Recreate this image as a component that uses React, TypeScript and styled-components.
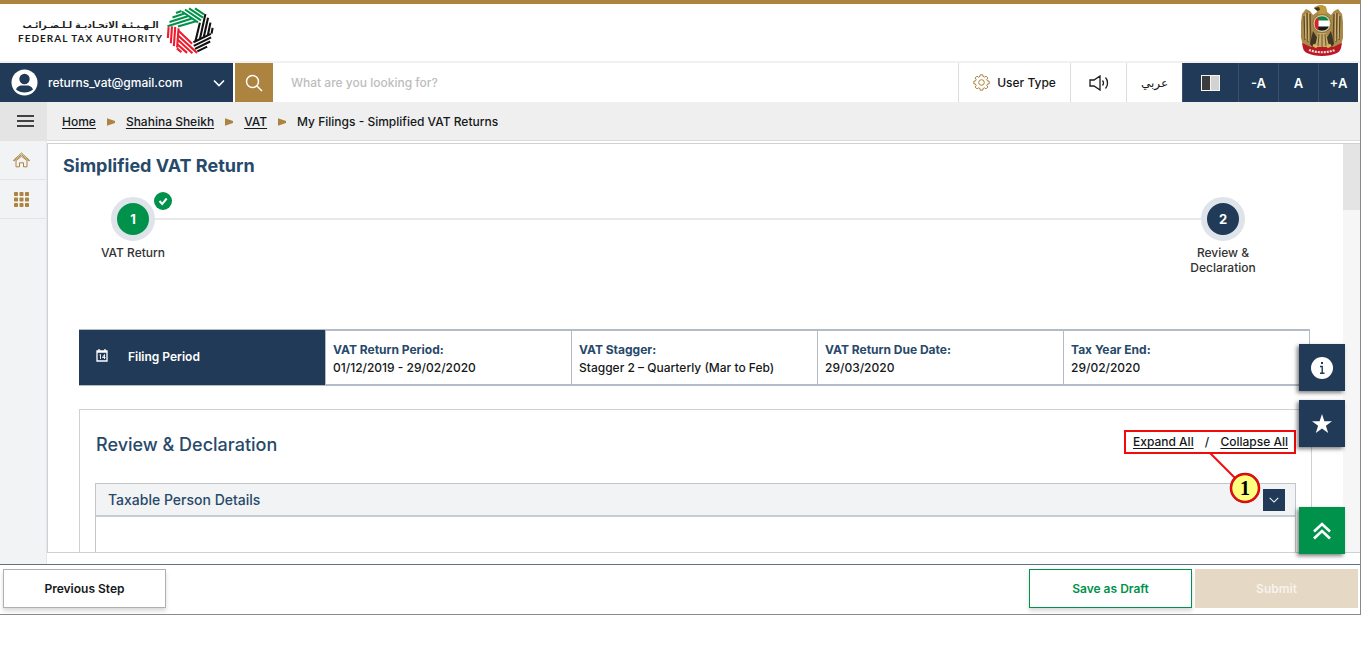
import React from "react";
import styled, { createGlobalStyle } from "styled-components";

const navy = "#203a57";
const ink = "#27496a";
const gold = "#ad8340";
const green = "#00924a";

const GlobalStyle = createGlobalStyle`
  *, *::before, *::after { box-sizing: border-box; }
  body {
    margin: 0;
    background: #fff;
    color: #16181a;
    font-family: Inter, "DejaVu Sans", sans-serif;
    font-size: 12px;
    font-weight: 500;
    line-height: 18px;
  }
  button, input { font: inherit; color: inherit; }
  button { cursor: pointer; padding: 0; border: 0; background: none; }
  a { color: inherit; }
  h1, h2, h3, dl, dd, ol, p { margin: 0; padding: 0; }
`;

const Page = styled.div`
  height: 100vh;
  padding-bottom: 33px;
`;

const Frame = styled.div`
  position: relative;
  display: flex;
  flex-direction: column;
  height: 100%;
  border-top: 4px solid ${gold};
  border-right: 1px solid #8a8a8a;
  border-bottom: 1px solid #8a8a8a;
`;

const Masthead = styled.header`
  display: flex;
  align-items: center;
  justify-content: space-between;
  height: 59px;
  flex: none;
  padding: 0 16px 4px 18px;
  border-bottom: 2px solid #f1f1f1;
`;

const Brand = styled.a`
  display: flex;
  align-items: center;
  gap: 3px;
  color: #1c1c1c;
  text-decoration: none;
`;

const BrandText = styled.span`
  display: flex;
  flex-direction: column;
  align-items: center;
`;

const BrandArabic = styled.span`
  font-family: "DejaVu Sans", sans-serif;
  font-size: 9px;
  font-weight: 700;
  line-height: 14px;
  white-space: nowrap;
`;

const BrandLatin = styled.span`
  font-family: Lato, sans-serif;
  font-size: 10px;
  font-weight: 700;
  line-height: 12px;
  letter-spacing: 1px;
  white-space: nowrap;
`;

const Toolbar = styled.div`
  display: flex;
  flex: none;
  height: 39px;
  padding-right: 2px;
`;

const Account = styled.button`
  display: flex;
  align-items: center;
  gap: 10px;
  width: 233px;
  padding: 0 7px 0 11px;
  background: ${navy};
  color: #fff;
  text-align: left;
`;

const AccountName = styled.span`
  flex: 1;
`;

const SearchForm = styled.form`
  display: flex;
  flex: 1;
  margin-left: 2px;
`;

const SearchButton = styled.button`
  display: grid;
  place-items: center;
  width: 38px;
  background: ${gold};
`;

const SearchInput = styled.input`
  flex: 1;
  min-width: 0;
  padding: 0 18px;
  border: 0;
  outline: 0;
  background: #fff;
  &::placeholder { color: #bdbdbd; opacity: 1; }
`;

const ToolButton = styled.button<{ $width: number }>`
  display: flex;
  align-items: center;
  justify-content: center;
  gap: 7px;
  width: ${(p) => p.$width}px;
  border-left: 1px solid #dcdcdc;
`;

const NavyButton = styled(ToolButton)`
  background: ${navy};
  border-left-color: #3a516b;
  color: #fff;
  font-size: 13px;
  font-weight: 600;
`;

const Trail = styled.div`
  display: flex;
  flex: none;
  height: 39px;
  background: #efefef;
`;

const MenuButton = styled.button`
  display: grid;
  place-items: center;
  width: 47px;
  padding: 0 0 2px 4px;
  background: #e4e4e4;
`;

const Crumbs = styled.ol`
  display: flex;
  flex: 1;
  align-items: center;
  gap: 11px;
  padding: 2px 0 0 15px;
  list-style: none;
  border-bottom: 1px solid #dcdcdc;
`;

const Crumb = styled.li`
  display: flex;
  align-items: center;
  gap: 11px;
  a { text-underline-offset: 2px; }
`;

const Body = styled.div`
  display: flex;
  flex: 1;
  min-height: 0;
`;

const Rail = styled.nav`
  width: 47px;
  flex: none;
  background: #f2f3f5;
  border-right: 1px solid #e4e6e8;
`;

const RailLink = styled.a`
  display: grid;
  place-items: center;
  height: 39px;
  padding-right: 3px;
  border-bottom: 1px solid #e2e4e6;
`;

const Pane = styled.main`
  display: flex;
  flex: 1;
  min-width: 0;
  margin: 2px 0 11px;
  border: 1px solid #cfd2d4;
  border-right: 0;
`;

const Content = styled.div`
  flex: 1;
  min-width: 0;
  overflow: hidden;
`;

const ScrollTrack = styled.div`
  width: 17px;
  flex: none;
  background: #f6f6f6;
`;

const ScrollThumb = styled.div`
  height: 66px;
  background: #e4e4e4;
`;

const Title = styled.h1`
  padding: 10px 15px 0;
  color: ${ink};
  font-size: 18px;
  font-weight: 700;
  line-height: 24px;
`;

const Steps = styled.ol`
  display: grid;
  grid-template-columns: 80px 1fr 80px;
  height: 132px;
  margin: 19px 80px 0 45px;
  list-style: none;
`;

const Step = styled.li`
  display: flex;
  flex-direction: column;
  align-items: center;
  gap: 4px;
  color: #333;
  line-height: 15px;
  text-align: center;
`;

const StepDot = styled.span<{ $done?: boolean }>`
  position: relative;
  display: grid;
  place-items: center;
  width: 44px;
  height: 44px;
  border: 6px solid #dfe3ea;
  border-radius: 50%;
  background: ${(p) => (p.$done ? green : navy)};
  color: #fff;
  font-size: 13px;
  font-weight: 700;
`;

const StepCheck = styled.svg`
  position: absolute;
  top: -11px;
  right: -23px;
`;

const StepLine = styled.li`
  height: 2px;
  margin: 21px -18px 0;
  background: #e7e9eb;
`;

const Period = styled.section`
  display: grid;
  grid-template-columns: repeat(5, 1fr);
  height: 57px;
  margin: 0 33px 0 31px;
  border: 2px solid #b3bcc6;
  border-width: 2px 1px 2px 0;
`;

const PeriodHead = styled.h2`
  display: flex;
  align-items: center;
  gap: 20px;
  margin: -1px 0;
  padding: 0 0 1px 17px;
  background: ${navy};
  color: #fff;
  font-size: 12px;
  font-weight: 600;
  svg { margin-bottom: 4px; }
`;

const PeriodCell = styled.dl`
  padding: 10px 7px 0;
  border-left: 1px solid #b3bcc6;
  white-space: nowrap;
  dt { color: ${ink}; font-weight: 700; }
`;

const Card = styled.section`
  height: 300px;
  margin: 23px 31px 0;
  padding: 20px 15px 0;
  border: 1px solid #cfd2d4;
`;

const CardHead = styled.div`
  display: flex;
  justify-content: space-between;
  align-items: flex-start;
  height: 53px;
`;

const CardTitle = styled.h2`
  padding: 3px 0 0 1px;
  color: ${ink};
  font-size: 18px;
  font-weight: 500;
  line-height: 24px;
`;

const Highlight = styled.div`
  position: relative;
  display: flex;
  align-items: center;
  justify-content: space-between;
  width: 172px;
  height: 24px;
  padding: 0 6px 0 7px;
  border: 2px solid #f50a0a;
`;

const TextButton = styled.button`
  text-decoration: underline;
  text-underline-offset: 2px;
`;

const Callout = styled.svg`
  position: absolute;
  z-index: 2;
  top: 20px;
  left: 83px;
  font-family: "Liberation Serif", serif;
  font-size: 20px;
  font-weight: 700;
`;

const Panel = styled.div`
  height: 200px;
  border: 1px solid #c3c6c9;
`;

const PanelHead = styled.div`
  display: flex;
  align-items: center;
  justify-content: space-between;
  height: 33px;
  padding: 0 10px 0 12px;
  background: #f2f3f5;
  border-bottom: 2px solid #c9cccf;
`;

const PanelTitle = styled.h3`
  color: ${ink};
  font-size: 14px;
  font-weight: 500;
`;

const PanelToggle = styled.button`
  display: grid;
  place-items: center;
  width: 22px;
  height: 22px;
  background: ${navy};
`;

const Floating = styled.div`
  position: absolute;
  z-index: 3;
  right: 15px;
  bottom: 60px;
  display: flex;
  flex-direction: column;
  gap: 9px;
`;

const FloatButton = styled.button<{ $top?: boolean }>`
  display: grid;
  place-items: center;
  width: 46px;
  height: 47px;
  margin-top: ${(p) => (p.$top ? 51 : 0)}px;
  background: ${(p) => (p.$top ? green : navy)};
  box-shadow: -2px 2px 4px rgba(0, 0, 0, 0.5);
`;

const Actions = styled.footer`
  display: flex;
  flex: none;
  gap: 3px;
  height: 50px;
  padding: 4px 2px 6px 3px;
  border-top: 1px solid #5f7380;
`;

const ActionButton = styled.button<{ $kind: "plain" | "draft" | "submit" }>`
  width: 163px;
  background: ${(p) => (p.$kind === "submit" ? "#e5d8c4" : "#fff")};
  border: 1px solid ${(p) => ({ plain: "#b0b0b0", draft: green, submit: "#e5d8c4" })[p.$kind]};
  color: ${(p) => ({ plain: "#16181a", draft: green, submit: "#f8f3ec" })[p.$kind]};
  font-weight: 600;
  box-shadow: ${(p) => (p.$kind === "submit" ? "none" : "0 3px 4px rgba(0, 0, 0, 0.15)")};
`;

const Spacer = styled.div`
  flex: 1;
`;

const FtaMark = () => (
  <svg width="48" height="48" viewBox="-24 -24 48 48" aria-hidden="true">
    {[green, "#111", "#ee1c2e"].map((color, i) => (
      <g key={color} stroke={color} strokeWidth="2.100" fill="none" transform={`rotate(${i * 120})`}>
        <path d="M-8-19.500 8-8.600M-5-21.500 11-10.700M-1-22.700 13-13.300M5-22.700 14-16.600" />
        <path d="M-14-18-8.500-20M-17.500-13.500-5.500-17.500M-20.500-9-1.500-15M-22.500-4.800 2-12.600M-12-4.500 6-9.800" />
      </g>
    ))}
  </svg>
);

const Emblem = () => (
  <svg width="44" height="54" viewBox="0 0 44 54" role="img" aria-label="United Arab Emirates emblem">
    <path d="M14 4c2-3 9-4 12-1l1 5 4 3 3-4 4-2 4 5 1 8v16l-2 7-5 4H8l-5-4-2-7V18l1-8 4-5 4 2 3 4 4-3 1-3z" fill="#a98a4a" />
    <path d="M14 4c2-3 9-4 12-1l1 5-3 3-5-1-1-4z" fill="#c09a3c" />
    <path d="M14 4l5-1 1 3-3 1z" fill="#3d3020" />
    <path d="M4 12l1 24M7 9l1 29M10 10l1 29M40 12l-1 24M37 9l-1 29M34 10l-1 29" stroke="#5c4a28" strokeWidth="1.200" />
    <path d="M5.500 10v25M8.500 9v28M38.500 10v25M35.500 9v28" stroke="#dcc58a" strokeWidth=".7" />
    <path d="M13 27l-3 13 3 4 5-9zM31 27l3 13-3 4-5-9z" fill="#3f3524" />
    <path d="M18 29h8l3 14H15z" fill="#c7ac6a" />
    <path d="M19 30l-1 12M22 30v13M25 30l1 12" stroke="#6a5530" strokeWidth="1" />
    <circle cx="22" cy="19.500" r="9" fill="#dccb92" stroke="#7b6433" strokeWidth=".8" />
    <circle cx="22" cy="19.500" r="7.500" fill="#fff" />
    <path d="M15.200 16.500a7.500 7.500 0 0 1 13.600 0z" fill="#11834a" />
    <path d="M15.200 22.500a7.500 7.500 0 0 0 13.600 0z" fill="#1a1a1a" />
    <path d="M18.500 12.900v13.200a7.500 7.500 0 0 1 0-13.200z" fill="#d8212f" />
    <path d="M2 39c4 1 5 3 9 4h22c4-1 5-3 9-4-1 5-1 8-5 10-8 4-22 4-30 0-4-2-4-5-5-10z" fill="#bb1826" />
    <path d="M9 46c8 3 18 3 26 0" stroke="#f2d9d9" strokeWidth="2.200" strokeDasharray="2 1" fill="none" />
    <path d="M13 41l4 2M31 41l-4 2" stroke="#d9b659" strokeWidth="3" />
  </svg>
);

const Chevron = ({ size = 14, weight = 1.6 }: { size?: number; weight?: number }) => (
  <svg width={size} height={size} viewBox="0 0 14 14" fill="none" stroke="#fff" strokeWidth={weight} aria-hidden="true">
    <path d="M2 4.500 7 9.500l5-5" />
  </svg>
);

const UserIcon = () => (
  <svg width="27" height="27" viewBox="0 0 27 27" aria-hidden="true">
    <circle cx="13.500" cy="13.500" r="13" fill="#fff" />
    <circle cx="13.500" cy="10" r="5.200" fill={navy} />
    <path d="M5 20.500c2-4.500 5-4 8.500-4s6.500-.5 8.500 4c-4.500 4-12.500 4-17 0z" fill={navy} />
  </svg>
);

const gearOutline = Array.from({ length: 8 }, (_, i) => {
  const at = (deg: number, r: number) => {
    const a = ((i * 45 + deg) * Math.PI) / 180;
    return `${(8.5 + r * Math.cos(a)).toFixed(2)} ${(8.5 + r * Math.sin(a)).toFixed(2)}`;
  };
  return `${at(-14, 6.2)} ${at(-10, 7.8)} ${at(10, 7.8)} ${at(14, 6.2)}`;
}).join(" ");

const GearIcon = () => (
  <svg width="17" height="17" viewBox="0 0 17 17" fill="none" stroke={gold} strokeLinejoin="round" aria-hidden="true">
    <polygon points={gearOutline} />
    <circle cx="8.500" cy="8.500" r="2.800" />
  </svg>
);

const SpeakerIcon = () => (
  <svg width="20" height="16" viewBox="0 0 20 16" fill="none" stroke="#1c1c1c" strokeWidth="1.300" aria-hidden="true">
    <path d="M1 5v6h4l6 4V1L5 5zM13.500 5.500c1.200 1.500 1.200 3.500 0 5M16.500 2.500c2.700 3 2.700 8 0 11" />
  </svg>
);

const HomeIcon = () => (
  <svg width="17" height="16" viewBox="0 0 17 16" fill="none" stroke={gold} strokeWidth="1" aria-hidden="true">
    <path d="M1 9 .6 8.200 8.500 1l7.900 7.200L16 9 8.500 2.800zM3 8.500v6.300h3.500v-4h4v4H14V8.500L8.500 4.300z" />
  </svg>
);

const GridIcon = () => (
  <svg width="15" height="15" viewBox="0 0 15 15" fill={gold} aria-hidden="true">
    {[0, 5.5, 11].map((y) => [0, 5.5, 11].map((x) => <rect key={`${x}-${y}`} x={x} y={y} width="4" height="4" rx=".8" />))}
  </svg>
);

const CalendarIcon = () => (
  <svg width="12" height="13" viewBox="0 0 12 13" fill="none" stroke="#fff" aria-hidden="true">
    <path d="M1 2v10h10V2zM1 3h10M3 0v3M9 0v3" strokeWidth="1.300" />
    <path d="M3.500 6 4.500 5.500V10M8.500 10V5.500L6.500 8.500H9.500" strokeWidth=".9" />
  </svg>
);

const Arrow = () => (
  <svg width="8" height="8" viewBox="0 0 8 8" fill={gold} aria-hidden="true">
    <path d="M0 .3 8 3v2L0 7.700z" />
  </svg>
);

const periods = [
  ["VAT Return Period:", "01/12/2019 - 29/02/2020"],
  ["VAT Stagger:", "Stagger 2 – Quarterly (Mar to Feb)"],
  ["VAT Return Due Date:", "29/03/2020"],
  ["Tax Year End:", "29/02/2020"],
];

export default function App() {
  return (
    <Page>
      <GlobalStyle />
      <Frame>
        <Masthead>
          <Brand href="#home">
            <BrandText>
              <BrandArabic lang="ar" dir="rtl">الـهـيـئـة الاتحـاديـة لـلـضـرائـب</BrandArabic>
              <BrandLatin>FEDERAL TAX AUTHORITY</BrandLatin>
            </BrandText>
            <FtaMark />
          </Brand>
          <Emblem />
        </Masthead>

        <Toolbar>
          <Account type="button">
            <UserIcon />
            <AccountName>returns_vat@gmail.com</AccountName>
            <Chevron />
          </Account>
          <SearchForm role="search">
            <SearchButton type="button" aria-label="Search">
              <svg width="18" height="18" viewBox="0 0 18 18" fill="none" stroke="#fff" strokeWidth="1.500" aria-hidden="true">
                <circle cx="7.500" cy="7.500" r="6" />
                <path d="m12 12 5 5" />
              </svg>
            </SearchButton>
            <SearchInput type="search" aria-label="Search" placeholder="What are you looking for?" />
          </SearchForm>
          <ToolButton type="button" $width={112}><GearIcon />User Type</ToolButton>
          <ToolButton type="button" $width={56} aria-label="Read aloud"><SpeakerIcon /></ToolButton>
          <ToolButton type="button" $width={56} lang="ar">عربي</ToolButton>
          <NavyButton type="button" $width={56} aria-label="Contrast">
            <svg width="19" height="16" viewBox="0 0 19 16" aria-hidden="true">
              <path d="M0 0h19v16H0z" fill="#f4f4f4" />
              <path d="M1 1h8v14H1z" fill="#3c3c3c" />
              <path d="M10 1h8v14h-8z" fill="#d2d2d2" />
            </svg>
          </NavyButton>
          <NavyButton type="button" $width={40}>-A</NavyButton>
          <NavyButton type="button" $width={40}>A</NavyButton>
          <NavyButton type="button" $width={40}>+A</NavyButton>
        </Toolbar>

        <Trail>
          <MenuButton type="button" aria-label="Menu">
            <svg width="17" height="14" viewBox="0 0 17 14" stroke="#3f4142" strokeWidth="2" aria-hidden="true">
              <path d="M0 2h17M0 7h17M0 12h17" />
            </svg>
          </MenuButton>
          <Crumbs>
            <Crumb><a href="#home">Home</a><Arrow /></Crumb>
            <Crumb><a href="#profile">Shahina Sheikh</a><Arrow /></Crumb>
            <Crumb><a href="#vat">VAT</a><Arrow /></Crumb>
            <Crumb>My Filings - Simplified VAT Returns</Crumb>
          </Crumbs>
        </Trail>

        <Body>
          <Rail>
            <RailLink href="#home" aria-label="Home"><HomeIcon /></RailLink>
            <RailLink href="#services" aria-label="Services"><GridIcon /></RailLink>
          </Rail>
          <Pane>
            <Content>
              <Title>Simplified VAT Return</Title>
              <Steps>
                <Step>
                  <StepDot $done>
                    1
                    <StepCheck width="18" height="18" viewBox="0 0 18 18" aria-hidden="true">
                      <circle cx="9" cy="9" r="9" fill={green} />
                      <path d="m5.500 9 2.700 3 4.500-5.500" fill="none" stroke="#fff" strokeWidth="2" />
                    </StepCheck>
                  </StepDot>
                  VAT Return
                </Step>
                <StepLine aria-hidden="true" />
                <Step>
                  <StepDot>2</StepDot>
                  Review &amp; Declaration
                </Step>
              </Steps>

              <Period>
                <PeriodHead><CalendarIcon />Filing Period</PeriodHead>
                {periods.map(([term, value]) => (
                  <PeriodCell key={term}>
                    <dt>{term}</dt>
                    <dd>{value}</dd>
                  </PeriodCell>
                ))}
              </Period>

              <Card>
                <CardHead>
                  <CardTitle>Review &amp; Declaration</CardTitle>
                  <Highlight>
                    <TextButton type="button">Expand All</TextButton>
                    /
                    <TextButton type="button">Collapse All</TextButton>
                    <Callout width="54" height="54" viewBox="0 0 54 54">
                      <path d="M1 1 26 26" stroke="#f50a0a" strokeWidth="2" />
                      <circle cx="36" cy="36" r="14" fill="#ffff80" stroke="#a01010" strokeWidth="2.500" />
                      <circle cx="36" cy="36" r="14" fill="none" stroke="#f50a0a" strokeWidth="1.500" />
                      <text x="36" y="43" textAnchor="middle">1</text>
                    </Callout>
                  </Highlight>
                </CardHead>
                <Panel>
                  <PanelHead>
                    <PanelTitle>Taxable Person Details</PanelTitle>
                    <PanelToggle type="button" aria-label="Toggle Taxable Person Details"><Chevron size={12} weight={1.2} /></PanelToggle>
                  </PanelHead>
                </Panel>
              </Card>
            </Content>
            <ScrollTrack><ScrollThumb /></ScrollTrack>
          </Pane>
        </Body>

        <Actions>
          <ActionButton type="button" $kind="plain">Previous Step</ActionButton>
          <Spacer />
          <ActionButton type="button" $kind="draft">Save as Draft</ActionButton>
          <ActionButton type="button" $kind="submit">Submit</ActionButton>
        </Actions>

        <Floating>
          <FloatButton type="button" aria-label="Information">
            <svg width="24" height="24" viewBox="0 0 24 24" aria-hidden="true">
              <circle cx="12" cy="12" r="11" fill="#fff" />
              <path d="M12 6v2" fill="none" stroke={navy} strokeWidth="2" />
              <path d="M10 10.500h2.200v6.500M10 17.300h4.500" fill="none" stroke={navy} strokeWidth="1.400" />
            </svg>
          </FloatButton>
          <FloatButton type="button" aria-label="Favourites">
            <svg width="20" height="20" viewBox="0 0 20 20" fill="#fff" aria-hidden="true">
              <path d="m10 0 2.400 7.200H20l-6.100 4.500 2.300 7.300L10 14.500 3.800 19l2.300-7.300L0 7.200h7.600z" />
            </svg>
          </FloatButton>
          <FloatButton type="button" $top aria-label="Back to top">
            <svg width="18" height="18" viewBox="0 0 18 18" fill="none" stroke="#fff" strokeWidth="2.600" aria-hidden="true">
              <path d="m1 9.500 8-7.500 8 7.500M1 16.500 9 9l8 7.500" />
            </svg>
          </FloatButton>
        </Floating>
      </Frame>
    </Page>
  );
}
